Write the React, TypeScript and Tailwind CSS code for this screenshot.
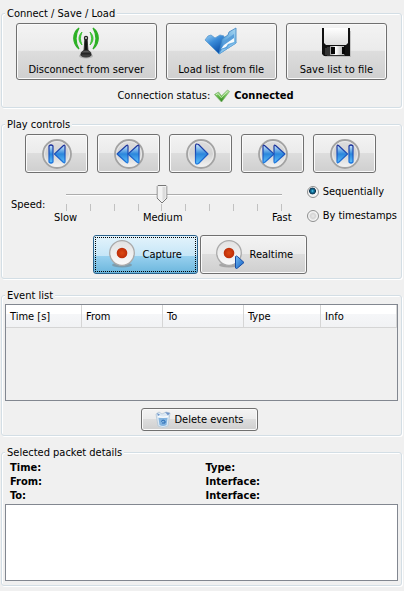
import { useState, type ReactNode } from "react";

const face =
  "rounded-[3px] border border-[#707070] bg-[linear-gradient(#f3f3f3_0%,#ebebeb_48%,#dddddd_49%,#cfcfcf_100%)] shadow-[inset_0_0_0_1px_#fafafa]";

function Group({ title, children }: { title: string; children: ReactNode }) {
  return (
    <fieldset className="min-w-0 rounded-[3px] border border-[#d3dee5] shadow-[inset_1px_1px_0_#fff,1px_1px_0_#fff]">
      <legend className="ml-[3px] bg-[#f0f0f0] px-0.5 leading-[15px]">{title}</legend>
      {children}
    </fieldset>
  );
}

function AntennaIcon() {
  return (
    <svg width="26" height="32" viewBox="0 0 26 32" fill="none">
      <defs>
        <linearGradient id="base" x1="0" y1="0" x2="0" y2="1">
          <stop offset="0" stopColor="#777" />
          <stop offset="0.5" stopColor="#222" />
          <stop offset="1" stopColor="#555" />
        </linearGradient>
      </defs>
      <path d="M6 1C-1 6-1 16 6 22C2 15 2 8 6 1ZM20 1C27 6 27 16 20 22C24 15 24 8 20 1Z" fill="#27b51f" stroke="#2fae28" strokeWidth="1.200" />
      <path d="M9 5C5 9 5 14 9 18C7 13 7 10 9 5ZM17 5C21 9 21 14 17 18C19 13 19 10 17 5Z" fill="#36c82d" stroke="#3fbf38" strokeWidth="1" />
      <ellipse cx="13" cy="29" rx="7" ry="2.5" fill="#999" opacity="0.6" />
      <path d="M12 11h2l1 13h-4z" fill="#111" stroke="#333" />
      <circle cx="13" cy="11" r="2.2" fill="#222" />
      <circle cx="13" cy="11" r="1" fill="#ccc" />
      <path d="M8 27c0-5 10-5 10 0c2 4-12 4-10 0z" fill="url(#base)" stroke="#222" strokeWidth="0.8" />
    </svg>
  );
}

function FolderIcon() {
  return (
    <svg width="34" height="32" viewBox="0 0 34 32" fill="none">
      <defs>
        <linearGradient id="folder" x1="0" y1="0" x2="0.6" y2="1">
          <stop offset="0" stopColor="#9bd0f3" />
          <stop offset="0.45" stopColor="#3a8bd8" />
          <stop offset="1" stopColor="#0b4fa8" />
        </linearGradient>
        <linearGradient id="flap" x1="0" y1="1" x2="1" y2="0">
          <stop offset="0" stopColor="#1f6fc6" />
          <stop offset="0.5" stopColor="#69afe2" />
          <stop offset="1" stopColor="#a9d6f0" />
        </linearGradient>
      </defs>
      <path d="M1 13l3-4 3-1 4 3 5-3 4 1v12l-5 6z" fill="url(#folder)" stroke="#5b9bcf" strokeWidth="0.8" strokeLinejoin="round" />
      <path d="M15 27l3-15 6-4 1-3 7-4v15z" fill="url(#flap)" stroke="#3c83c0" strokeWidth="0.8" strokeLinejoin="round" />
      <path d="M18 21l2-7 10-7v5z" fill="#5a9fda" />
      <path d="M17 22l3-4 10-7v4l-6 2-2 3z" fill="#f5fafd" />
      <path d="M15 27l3-5 5-1 2-3 7-3v1z" fill="#8cc4ec" stroke="#5da4dc" strokeWidth="0.6" />
    </svg>
  );
}

function FloppyIcon() {
  return (
    <svg width="32" height="32" viewBox="0 0 32 32">
      <defs>
        <linearGradient id="label" x1="0" y1="0" x2="0" y2="1">
          <stop offset="0" stopColor="#fff" />
          <stop offset="1" stopColor="#dedede" />
        </linearGradient>
        <linearGradient id="shutter" x1="0" y1="0" x2="1" y2="0">
          <stop offset="0" stopColor="#999" />
          <stop offset="0.4" stopColor="#fff" />
          <stop offset="1" stopColor="#aaa" />
        </linearGradient>
      </defs>
      <path d="M3 4h28v26H5z" fill="#aaa" opacity="0.6" />
      <path d="M2 1h28v28H4l-2-2z" fill="#111" />
      <path d="M4 1h24v15l-2 2H6l-2-2z" fill="url(#label)" />
      <path d="M7 20h18v9H7z" fill="#333" />
      <path d="M5 21h4v7H5z" fill="#333" />
      <path d="M10 19h14v9H10z" fill="url(#shutter)" />
      <path d="M11 20h4v7h-4zM22 20h3v7h-3z" fill="#050505" />
    </svg>
  );
}

function CheckIcon() {
  return (
    <svg width="16" height="16" viewBox="0 0 16 16">
      <defs>
        <linearGradient id="tick" x1="0" y1="0" x2="0" y2="1">
          <stop offset="0" stopColor="#c1e8b0" />
          <stop offset="0.5" stopColor="#68bd4c" />
          <stop offset="1" stopColor="#2c7f1c" />
        </linearGradient>
      </defs>
      <path d="M0.500 6.500l4-2.500 3 4 6-6 2 1.500-8 10.500z" fill="url(#tick)" stroke="#7fb56f" strokeWidth="0.8" />
      <path d="M2 6.800l2-1.200 3.300 4 6-6" fill="none" stroke="#d9f2cc" strokeWidth="0.8" />
    </svg>
  );
}

const transport = [
  { label: "First", paths: ["M7 7q2-2 4 0v16q-2 2-4 0z", "M21.500 6.500q1.500-1 1.500 1v15q0 2-1.500 1L12.500 15z"] },
  { label: "Rewind", paths: ["M12.500 6.500q1.500-1 1.500 1v15q0 2-1.500 1L3 15z", "M23.500 6.500q1.500-1 1.500 1v15q0 2-1.500 1L14 15z"] },
  { label: "Play", paths: ["M9.500 7q0-3 3-1.500L22 15l-9.500 9.500q-3 1.500-3-1.500z"] },
  { label: "Forward", paths: ["M6.500 6.500q-1.500-1-1.500 1v15q0 2 1.500 1L16 15z", "M17.500 6.500q-1.500-1-1.500 1v15q0 2 1.500 1L27 15z"] },
  { label: "Last", paths: ["M8.500 6.500q-1.500-1-1.500 1v15q0 2 1.500 1L17.500 15z", "M19 7q2-2 4 0v16q-2 2-4 0z"] },
];

function TransportIcon({ paths }: { paths: string[] }) {
  return (
    <svg width="32" height="32" viewBox="-1 -1 32 32">
      <defs>
        <linearGradient id="disc" x1="0" y1="0" x2="0" y2="1">
          <stop offset="0" stopColor="#dedede" />
          <stop offset="0.5" stopColor="#d2d2d2" />
          <stop offset="1" stopColor="#f5f5f5" />
        </linearGradient>
        <linearGradient id="glyph" x1="0" y1="0" x2="0" y2="1">
          <stop offset="0" stopColor="#d5edfb" />
          <stop offset="0.5" stopColor="#2b86dc" />
          <stop offset="1" stopColor="#5cc0fb" />
        </linearGradient>
        <linearGradient id="edge" x1="0" y1="0" x2="0" y2="1">
          <stop offset="0" stopColor="#1b2f98" />
          <stop offset="1" stopColor="#1d78df" />
        </linearGradient>
      </defs>
      <circle cx="15" cy="15" r="14" fill="url(#disc)" stroke="#a3a3a3" strokeWidth="1.800" />
      <circle cx="15" cy="15" r="12.500" fill="none" stroke="#ececec" strokeWidth="0.8" />
      {paths.map((d) => (
        <path key={d} d={d} fill="url(#glyph)" stroke="url(#edge)" strokeWidth="1.200" strokeLinejoin="round" />
      ))}
    </svg>
  );
}

function RecordIcon({ play = false }: { play?: boolean }) {
  return (
    <svg width="32" height="32" viewBox="0 0 32 32">
      <defs>
        <linearGradient id="plate" x1="0" y1="0" x2="0" y2="1">
          <stop offset="0" stopColor="#e2e2e2" />
          <stop offset="1" stopColor="#fafafa" />
        </linearGradient>
        <radialGradient id="dot">
          <stop offset="0" stopColor="#dc4a14" />
          <stop offset="1" stopColor="#bd2d08" />
        </radialGradient>
        <linearGradient id="arrow" x1="0" y1="0" x2="1" y2="1">
          <stop offset="0" stopColor="#79bdf0" />
          <stop offset="1" stopColor="#0b5cc5" />
        </linearGradient>
      </defs>
      <ellipse cx="16" cy="26" rx="10" ry="2.500" fill="#777" opacity="0.5" />
      <circle cx="16" cy="14" r="12.300" fill="url(#plate)" stroke="#aaa" strokeWidth="1.300" />
      <circle cx="16" cy="14" r="5.300" fill="url(#dot)" />
      {play && <path d="M22.500 17.500q1-1 2 0l6.500 6-6.500 5.500q-1 1-2 0z" fill="url(#arrow)" stroke="#174da5" />}
    </svg>
  );
}

function BinIcon() {
  return (
    <svg width="16" height="17" viewBox="0 0 16 17">
      <path d="M1 3l3-2 3 2 4-2 4 1-2 13q-5 3-10 0z" fill="#dce9f4" stroke="#b5c6d6" strokeWidth="0.8" />
      <path d="M2 2l3 1.500-2 1.500zM10 1l5 1-2 2.500z" fill="#6f94c8" />
      <path d="M3.500 7h9l-1 7q-3.500 2-7 0z" fill="#82b3df" />
      <path d="M6 10.500l2-1.500 2 1v2h-3" fill="none" stroke="#286bb4" />
      <path d="M3 5.500q5 1.500 10 0" fill="none" stroke="#fff" />
    </svg>
  );
}

function FileButton({ className, icon, label }: { className: string; icon: ReactNode; label: string }) {
  return (
    <button className={`flex h-[57px] flex-col items-center pt-[3px] whitespace-nowrap ${face} ${className}`}>
      {icon}
      <span className="mt-1 leading-[14px]">{label}</span>
    </button>
  );
}

function Speed() {
  const [value, setValue] = useState(4);
  return (
    <div className="flex min-w-0 grow items-center">
      <label htmlFor="speed" className="w-12 shrink-0 pl-[5px]">
        Speed:
      </label>
      <div className="min-w-0 grow">
        <div className="relative ml-3 mr-[10px] h-[26px]">
          <div className="h-[9px]" />
          <div className="h-0.5 border-b border-t border-b-[#fdfdfd] border-t-[#adadad]" />
          <div className="mt-2 flex justify-between">
            {Array.from({ length: 10 }, (_, i) => (
              <span key={i} className="h-[7px] w-px bg-[#c1c1c1]" />
            ))}
          </div>
          <input
            id="speed"
            type="range"
            min={0}
            max={9}
            value={value}
            onChange={(e) => setValue(Number(e.target.value))}
            className="absolute inset-x-0 top-0 m-0 h-[20px] w-full opacity-0"
          />
          <svg
            width="11"
            height="19"
            viewBox="0 0 11 19"
            className="pointer-events-none absolute top-0 -translate-x-1/2"
            style={{ left: `${(value / 9) * 100}%` }}
          >
            <path d="M1.500.5h8l1 1V13l-5 5-5-5V1.500z" fill="#f3f3f3" stroke="#777" />
            <path d="M6 2h3v11l-3 3z" fill="#dcdcdc" />
          </svg>
        </div>
        <div className="flex leading-[14px]">
          <span>Slow</span>
          <span className="flex-[67_1_0px]" />
          <span>Medium</span>
          <span className="flex-[91_1_0px]" />
          <span>Fast</span>
        </div>
      </div>
    </div>
  );
}

function Radio({ label, checked = false }: { label: string; checked?: boolean }) {
  return (
    <label className="flex items-center gap-1 whitespace-nowrap">
      <input
        type="radio"
        name="order"
        defaultChecked={checked}
        className="m-0 h-3 w-3 appearance-none rounded-full border border-[#8e8f8f] bg-[radial-gradient(circle,#e9e9e9_0,#d5d5d5_35%,#f4f4f4_60%)] checked:bg-[radial-gradient(circle_at_45%_40%,#6fd0ee_0,#1683ae_14%,#0d3550_38%,#f4f4f4_46%)]"
      />
      {label}
    </label>
  );
}

const columns = [
  { name: "Time [s]", width: "w-[76px]" },
  { name: "From", width: "w-[81px]" },
  { name: "To", width: "w-[81px]" },
  { name: "Type", width: "w-[77px]" },
  { name: "Info", width: "w-[76px]" },
];

const details = [
  ["Time:", "Type:"],
  ["From:", "Interface:"],
  ["To:", "Interface:"],
];

export default function App() {
  return (
    <main className="flex min-h-screen flex-col gap-[9px] bg-[#f0f0f0] pb-1 pl-px pr-0.5 pt-[6px] font-['DejaVu_Sans_Condensed','DejaVu_Sans',sans-serif] text-[11px] leading-[14px] text-black [font-stretch:condensed]">
      <Group title="Connect / Save / Load">
        <div className="flex gap-[9px] px-[14px] pt-0.5">
          <FileButton className="flex-[141_1_0px]" icon={<AntennaIcon />} label="Disconnect from server" />
          <FileButton className="flex-[111_1_0px]" icon={<FolderIcon />} label="Load list from file" />
          <FileButton className="flex-[101_1_0px]" icon={<FloppyIcon />} label="Save list to file" />
        </div>
        <div className="mb-[3px] mt-2 flex h-4 items-center justify-center pl-2">
          <span className="pr-1">Connection status:</span>
          <CheckIcon />
          <b className="pl-1">Connected</b>
        </div>
      </Group>

      <Group title="Play controls">
        <div className="flex justify-center gap-[9px] pr-0.5 pt-0.5">
          {transport.map(({ label, paths }) => (
            <button key={label} aria-label={label} className={`flex h-[39px] w-[63px] items-center justify-center ${face}`}>
              <TransportIcon paths={paths} />
            </button>
          ))}
        </div>
        <div className="mt-[11px] flex h-[41px] pl-1 pr-1">
          <Speed />
          <div className="flex shrink-0 flex-col gap-[10px] pl-[15px] pt-px">
            <Radio label="Sequentially" checked />
            <Radio label="By timestamps" />
          </div>
        </div>
        <div className="mb-1 mt-[10px] flex justify-center gap-0.5 pr-1">
          <button className="relative flex h-[39px] w-[105px] items-center gap-[5px] rounded-[3px] border border-[#2c628b] bg-[linear-gradient(#e3f3fb_0%,#c6e6f7_53%,#98d1ef_54%,#6cb6dd_100%)] pl-[12px]">
            <RecordIcon />
            Capture
            <span className="absolute inset-px border border-dotted border-black" />
          </button>
          <button className={`flex h-[39px] w-[107px] items-center gap-[5px] pl-[12px] ${face}`}>
            <RecordIcon play />
            Realtime
          </button>
        </div>
      </Group>

      <Group title="Event list">
        <div className="mx-[3px] mt-px h-[97px] border border-[#828790] pr-0.5">
          <table className="w-full table-fixed border-separate border-spacing-0">
            <thead>
              <tr className="h-[23px] bg-[linear-gradient(#fff_0%,#fff_40%,#f5f6f8_41%,#f1f2f4_100%)]">
                {columns.map(({ name, width }) => (
                  <th key={name} className={`border-b border-r border-[#d5d5d5] py-0 pl-1 pr-0 pt-0.5 text-left font-normal ${width}`}>
                    {name}
                  </th>
                ))}
              </tr>
            </thead>
            <tbody />
          </table>
        </div>
        <div className="mb-1 mt-[7px] flex justify-center pr-1">
          <button className={`flex h-[23px] w-[117px] items-center justify-center gap-[3px] whitespace-nowrap ${face}`}>
            <BinIcon />
            Delete events
          </button>
        </div>
      </Group>

      <Group title="Selected packet details">
        <dl className="grid grid-cols-2 pl-2 pt-px font-bold">
          {details.flat().map((name, i) => (
            <dt key={i}>{name}</dt>
          ))}
        </dl>
        <div className="mx-[3px] mb-1 mt-px">
          <textarea aria-label="Packet details" className="block h-[77px] w-full resize-none border border-[#828790] bg-white p-1" />
        </div>
      </Group>
    </main>
  );
}
